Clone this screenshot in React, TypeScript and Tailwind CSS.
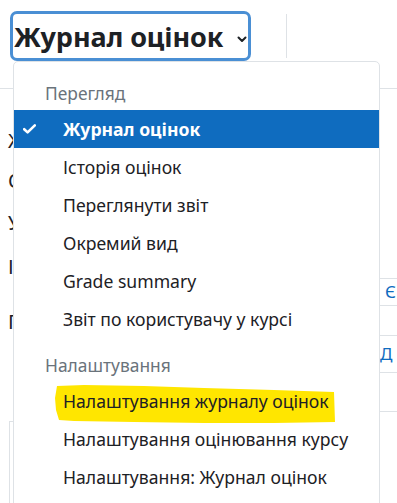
import React from "react";

const font = { fontFamily: '"Noto Sans", "Open Sans", Arial, sans-serif' };

function Check() {
  return (
    <svg width="13" height="10" viewBox="0 0 13 10" className="block">
      <path d="M1.2 5.2 L4.6 8.4 L11.8 1.4" fill="none" stroke="white" strokeWidth="2.6" strokeLinecap="round" strokeLinejoin="round" />
    </svg>
  );
}

function Item({ children }: { children: React.ReactNode }) {
  return (
    <div className="h-[38px] flex items-center pl-[49px] text-[17.6px] text-[#1d2125]">
      {children}
    </div>
  );
}

export default function App() {
  return (
    <div className="relative w-[397px] h-[503px] overflow-hidden bg-white" style={font}>
      {/* top bar */}
      <div className="flex items-start h-[89px] border-b border-[#dee2e6]">
        <div className="ml-[10px] mt-[11px] h-[50px] w-[241px] rounded-[7px] border-[3px] border-[#4a8fd4] flex items-center pl-[1px]">
          <span className="text-[27px] font-bold text-[#1d2125] leading-none tracking-[-0.1px]">Журнал оцінок</span>
          <svg width="10" height="7" viewBox="0 0 10 7" className="ml-[14px] mt-[6px]">
            <path d="M1.5 1.5 L5 5 L8.5 1.5" fill="none" stroke="#1d2125" strokeWidth="2" strokeLinecap="round" strokeLinejoin="round" />
          </svg>
        </div>
        <div className="ml-[35px] mt-[14px] h-[44px] w-px bg-[#dee2e6]" />
      </div>

      {/* background page content (partially covered) */}
      <div className="flex">
        <div className="w-[20px] flex flex-col text-[20px] text-[#1d2125] pl-[8px] leading-none">
          <div className="h-[34px]" />
          <div className="h-[36px] flex items-center">Ж</div>
          <div className="h-[44px] flex items-center">О</div>
          <div className="h-[40px] flex items-center">У</div>
          <div className="h-[48px] flex items-center">І</div>
          <div className="h-[62px] flex items-center">Г</div>
          <div className="h-[68px]" />
          <div className="ml-[1px] h-[100px] w-[10px] border-l border-t border-[#dee2e6]" />
        </div>
        <div className="flex-1" />
        <div className="w-[18px] flex flex-col text-[17px] text-[#0f6cbf]">
          <div className="h-[189px]" />
          <div className="h-[27px] border-t border-[#dee2e6] flex items-center pl-[6px]">Є</div>
          <div className="h-[30px] border-t border-[#dee2e6]" />
          <div className="h-[37px] border-t border-[#dee2e6] flex items-center pl-[1px]">Д</div>
          <div className="h-[39px] border-t border-[#dee2e6]" />
          <div className="h-[60px] border-t border-[#dee2e6]" />
        </div>
      </div>

      {/* dropdown menu */}
      <div className="absolute left-[13px] top-[61px] w-[367px] h-[460px] bg-white border border-[#dee2e6] rounded-t-[5px] pt-[14px]">
        <div className="h-[34px] flex items-center pl-[31px] text-[17.4px] text-[#6a737b]">Перегляд</div>
        <div className="h-[38px] flex items-center bg-[#0f6cbf] text-white text-[17.6px] font-bold">
          <div className="w-[49px] pl-[9px]">
            <Check />
          </div>
          <span>Журнал оцінок</span>
        </div>
        <Item>Історія оцінок</Item>
        <Item>Переглянути звіт</Item>
        <Item>Окремий вид</Item>
        <Item>Grade summary</Item>
        <Item>Звіт по користувачу у курсі</Item>
        <div className="mt-[10px] h-[34px] flex items-center pl-[31px] text-[17.4px] text-[#6a737b]">Налаштування</div>
        <div className="relative">
          <svg
            className="absolute pointer-events-none"
            width="300"
            height="50"
            viewBox="0 0 300 50"
            style={{ left: 40, top: 2 }}
          >
            <polygon
              points="3,2 30,1 90,2 150,4 220,6 280,8 281,38 220,39 150,39 80,38 20,37 5,36 2,26 1,14"
              fill="#ffe600"
            />
          </svg>
          <div className="relative">
            <Item>Налаштування журналу оцінок</Item>
          </div>
        </div>
        <Item>Налаштування оцінювання курсу</Item>
        <Item>Налаштування: Журнал оцінок</Item>
      </div>
    </div>
  );
}
